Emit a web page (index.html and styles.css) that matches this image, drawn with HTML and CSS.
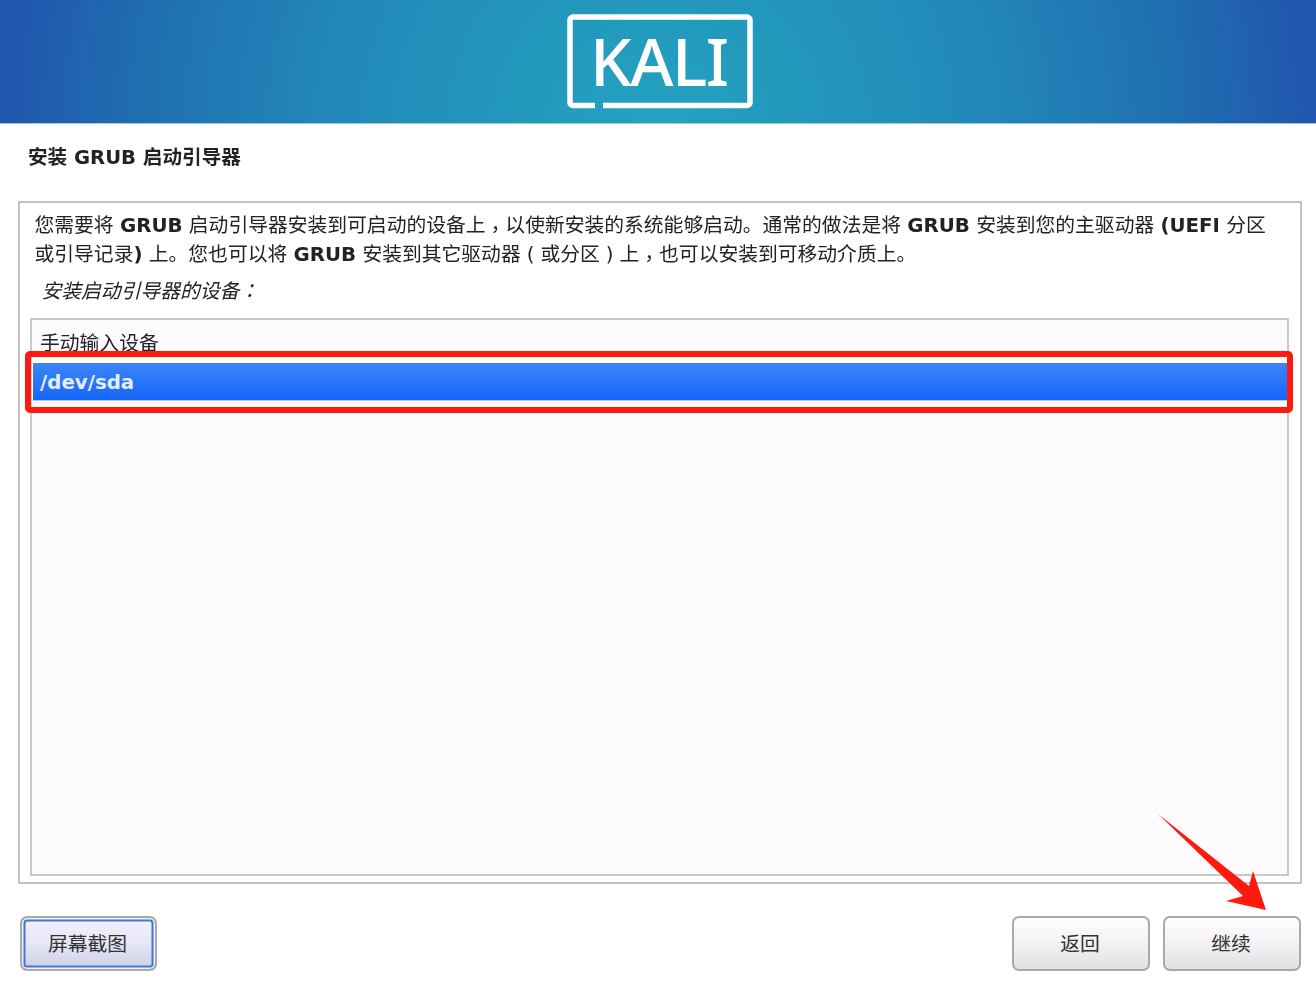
FILE: index.html
```html
<!DOCTYPE html>
<html lang="zh-CN">
<head>
<meta charset="utf-8">
<title>安装 GRUB 启动引导器</title>
<link rel="stylesheet" href="styles.css">
</head>
<body>
<div class="page">
  <header class="banner">
    <div class="logo">
      <svg class="logo-frame" width="186" height="96" viewBox="0 0 186 96" aria-hidden="true">
        <path d="M28 91.500H6a3 3 0 0 1-3-3V6a3 3 0 0 1 3-3H180a3 3 0 0 1 3 3V88.500a3 3 0 0 1-3 3H36" fill="none" stroke="#fff" stroke-width="5.500"/>
      </svg>
      <span class="logo-text">KALI</span>
    </div>
  </header>
  <main class="content">
    <h1 class="title">安装 GRUB 启动引导器</h1>
    <section class="panel">
      <p class="desc">
        <span class="line">您需要将 <b>GRUB</b> 启动引导器安装到可启动的设备上<span class="punct comma" lang="zh-TW">，</span>以使新安装的系统能够启动。通常的做法是将 <b>GRUB</b> 安装到您的主驱动器 <b>(UEFI</b> 分区</span>
        <span class="line">或引导记录<b>)</b> 上。您也可以将 <b>GRUB</b> 安装到其它驱动器<span class="paren">(</span>或分区<span class="paren">)</span>上<span class="punct comma" lang="zh-TW">，</span>也可以安装到可移动介质上。</span>
      </p>
      <p class="prompt">安装启动引导器的设备<span class="punct" lang="zh-TW">：</span></p>
      <div class="list">
        <div class="item">手动输入设备</div>
        <div class="item selected">/dev/sda</div>
      </div>
    </section>
    <footer class="actions">
      <button class="btn focus">屏幕截图</button>
      <div class="right">
        <button class="btn">返回</button>
        <button class="btn">继续</button>
      </div>
    </footer>
  </main>
  <div class="mark-box"></div>
  <svg class="mark-arrow" width="120" height="110" viewBox="0 0 120 110" aria-hidden="true">
    <path d="M0 4L91 76 95 61 108 100 68 91 85 86Z" fill="#ff1a0f"/>
  </svg>
</div>
</body>
</html>
```
FILE: styles.css
```css
* { box-sizing: border-box; }
html, body { margin: 0; padding: 0; }
body {
  background: #fff;
  color: #222;
  font-family: "DejaVu Sans", "Noto Sans CJK SC", sans-serif;
  font-size: 19.8px;
}
.page { position: relative; width: 1316px; height: 986px; overflow: hidden; }
.banner {
  height: 124px;
  margin-bottom: -1px;
  display: flex;
  justify-content: center;
  padding: 14px 0 0 4px;
  border-bottom: 1px solid #9ccbe6;
  background: radial-gradient(circle 680px at 658px 130px, #24a3bf 0, #2299bd 130px, #2288ba 330px, #2070b0 510px, #2155ae 660px, #2155ae 680px);
}
.logo {
  position: relative;
  width: 186px;
  height: 96px;
  filter: blur(0.5px);
}
.logo-frame { display: block; }
.logo-text {
  position: absolute;
  left: 23px;
  top: 1px;
  color: #fff;
  font-family: "Noto Sans", sans-serif;
  font-size: 66px;
  font-weight: 500;
  line-height: 90px;
  letter-spacing: -1.500px;
}
.content { padding: 0 14px 0 18px; }
.title {
  margin: 0;
  height: 78px;
  padding: 21px 0 0 10px;
  font-size: 19.6px;
  line-height: 27px;
  font-weight: 700;
  color: #222;
  filter: blur(0.4px);
}
.panel {
  height: 683px;
  border: 2px solid #c2c2c2;
  padding: 9px 11px 6px 10px;
  display: flex;
  flex-direction: column;
}
.desc { margin: 0 0 0 4.500px; filter: blur(0.4px); }
.line { display: block; height: 28.500px; white-space: nowrap; line-height: 28.500px; }
.desc b { font-weight: 700; color: #222; }
.punct { font-family: "Noto Sans CJK TC", sans-serif; line-height: 0; }
.comma { vertical-align: -5px; }
.paren { margin: 0 6px; }
.prompt {
  margin: 8px 0 0 11.500px;
  height: 21px;
  line-height: 30px;
  font-style: italic;
  filter: blur(0.4px);
}
.list {
  flex: 1;
  margin-top: 20px;
  border: 2px solid #c8c8c8;
  background: #fefbff;
  padding: 9px 0 0 1px;
}
.item {
  padding-left: 7px;
  height: 33px;
  line-height: 30px;
  filter: blur(0.4px);
}
.item.selected {
  height: 38px;
  line-height: 39px;
  margin-top: 1px;
  font-weight: 700;
  color: #e2ecff;
  background: linear-gradient(#3d85f8, #1466f8);
  border-bottom: 1px solid #a9c6fa;
  filter: none;
}
.actions {
  display: flex;
  justify-content: space-between;
  margin-top: 32px;
  padding: 0 1px 0 2px;
}
.right { display: flex; gap: 13px; }
.btn {
  width: 138px;
  height: 55px;
  border: 2px solid #a9a9a9;
  border-radius: 7px;
  background: linear-gradient(#fefcff, #f4f2f5 45%, #e2e0e3);
  color: #333;
  font-family: inherit;
  font-size: 19.8px;
  padding: 0 2px 2px 0;
}
.btn.focus {
  width: 137px;
  padding: 0 2px 2px 0;
  box-shadow: inset 0 0 0 1.500px #eef0fa, inset 0 0 0 3.500px #3f78d0;
  background: linear-gradient(#f2f0ff, #e8e8f8 45%, #ccd0e4);
}
.mark-box {
  position: absolute;
  left: 25px;
  top: 351px;
  width: 1268px;
  height: 62px;
  border: 6px solid #ff1a0f;
  border-radius: 5px;
}
.mark-arrow { position: absolute; left: 1158px; top: 810px; }
```
